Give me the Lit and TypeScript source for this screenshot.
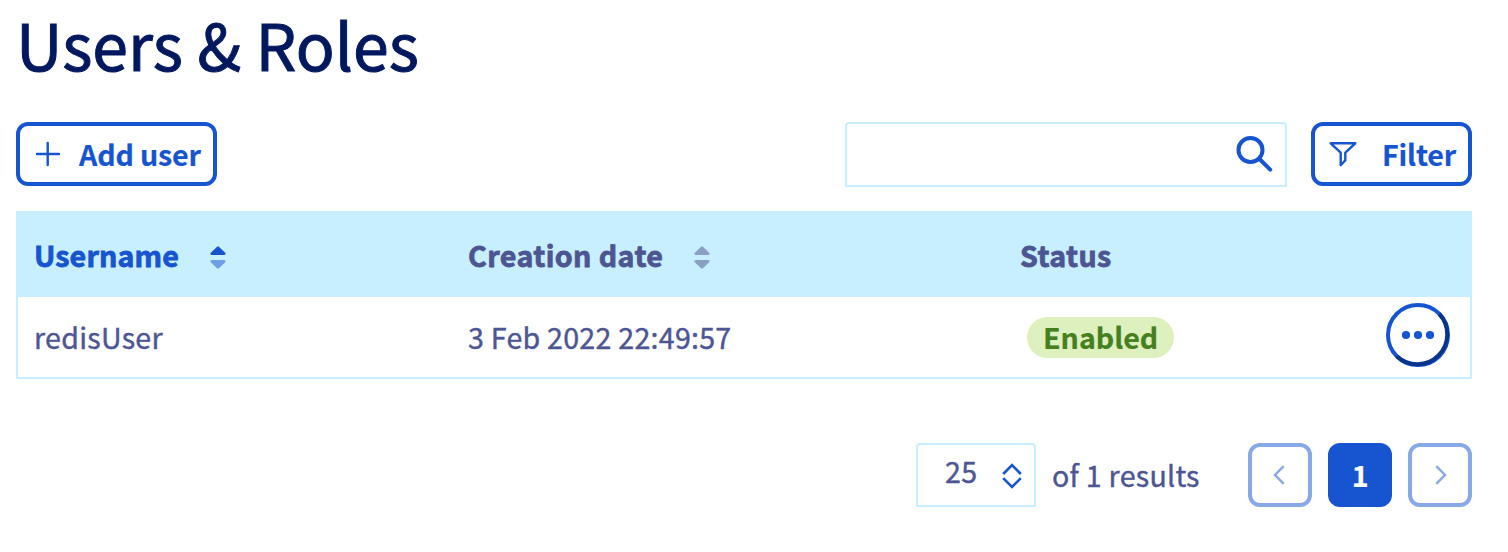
import { LitElement, html, css, svg } from "lit";
import { customElement } from "lit/decorators.js";
import { classMap } from "lit/directives/class-map.js";

const columns = [
  { label: "Username", sortable: true, active: true },
  { label: "Creation date", sortable: true, active: false },
  { label: "Status", sortable: false, active: false },
];

const users = [{ name: "redisUser", created: "3 Feb 2022 22:49:57", status: "Enabled" }];

const sortArrows = svg`
  <path d="M7.1.7Q8-.1 8.9.7L15.2 6.8Q15.9 7.6 15.4 8.3Q15 9 14.2 9H1.8Q1 9 .6 8.3Q.1 7.6.8 6.8Z"/>
  <path class="down" d="M7.1 22.3Q8 23.1 8.9 22.3L15.2 16.2Q15.9 15.4 15.4 14.7Q15 14 14.2 14H1.8Q1 14 .6 14.7Q.1 15.4.8 16.2Z"/>`;

@customElement("app-root")
export class AppRoot extends LitElement {
  static styles = css`
    :host {
      display: block;
      box-sizing: border-box;
      height: 552px;
      padding: 0 36px 0 16px;
      background: #fff;
      color: #4d5592;
      font-family: "Noto Sans CJK SC", "Noto Sans CJK JP", sans-serif;
      font-size: 28.6px;
      line-height: 40px;
      letter-spacing: 0.26px;
      -webkit-text-stroke: 0.4px currentColor;
      white-space: nowrap;
    }
    * { box-sizing: border-box; }
    svg { display: block; flex: none; fill: none; stroke: currentColor; }
    h1 {
      margin: 0;
      height: 122px;
      color: #00185e;
      font-size: 64.4px;
      line-height: 86px;
      font-weight: 400;
      letter-spacing: 0;
      -webkit-text-stroke: 1px currentColor;
    }
    button {
      display: flex;
      align-items: center;
      height: 64px;
      margin: 0;
      padding: 0;
      border: 4px solid #1654d0;
      border-radius: 12px;
      background: #fff;
      color: #1654d0;
      font: inherit;
      font-weight: 700;
      letter-spacing: -0.15px;
      -webkit-text-stroke: 0.2px currentColor;
    }
    .toolbar { display: flex; height: 65px; align-items: flex-start; margin-bottom: 24px; }
    .add { width: 201px; padding-left: 15px; gap: 18px; }
    .search {
      display: flex;
      justify-content: flex-end;
      width: 442px;
      height: 65px;
      margin: 0 24px 0 auto;
      padding: 11px 12px 0 0;
      border: 2px solid #c8efff;
      border-radius: 4px 4px 0 0;
      color: #1654d0;
    }
    .filter { width: 161px; padding-left: 14px; gap: 25px; }
    .table { height: 168px; border: 2px solid #c8efff; border-top: 0; }
    .row {
      display: grid;
      grid-template-columns: 434px 552px 1fr auto;
      align-items: center;
      height: 80px;
      padding-left: 16px;
    }
    .head {
      height: 86px;
      padding-top: 2px;
      background: #c8efff;
      font-weight: 700;
      letter-spacing: 0.43px;
      -webkit-text-stroke: 0.8px currentColor;
    }
    .cell { display: flex; align-items: center; gap: 31px; }
    .active { color: #1654d0; letter-spacing: 0.15px; }
    .sort { fill: #8b9fc4; stroke: none; margin-top: 5px; }
    .active .sort { fill: #1654d0; }
    .active .down { fill: #6d9fe6; }
    .badge {
      height: 41px;
      margin-left: 7px;
      padding: 0 16px;
      border-radius: 21px;
      background: #ddf0be;
      color: #457f20;
      font-weight: 700;
      letter-spacing: 0;
      -webkit-text-stroke: 0.2px currentColor;
    }
    .more { color: #1654d0; margin: 0 20px 4px 0; }
    .pager { display: flex; align-items: flex-start; justify-content: flex-end; margin-top: 64px; }
    .size {
      display: flex;
      width: 120px;
      height: 64px;
      padding: 6px 12px 0 27px;
      justify-content: space-between;
      border: 2px solid #c8efff;
      border-radius: 4px 4px 0 0;
    }
    .size svg { color: #1654d0; margin-top: 12px; }
    .results { width: 148px; margin: 12px 48px 0 16px; }
    .page { width: 64px; justify-content: center; margin-left: 16px; }
    .prev { margin-left: 0; padding-right: 2px; }
    .next { padding-left: 2px; }
    .muted { border-color: #87a9e6; color: #87a9e6; }
    .current { background: #1654d0; color: #fff; }
  `;

  render() {
    return html`
      <h1>Users &amp; Roles</h1>
      <div class="toolbar">
        <button class="add">
          <svg width="26" height="26" viewBox="0 0 26 26" stroke-width="2.4" stroke-linecap="round"><path d="M2 13H24M12.7 2V24"/></svg>
          <span class="add-label">Add user</span>
        </button>
        <div class="search">
          <svg width="38" height="38" viewBox="0 0 38 38" stroke-width="4" stroke-linecap="round"><circle cx="15.5" cy="15" r="12"/><path d="M24.5 24L35.2 34.7"/></svg>
        </div>
        <button class="filter">
          <svg width="28" height="28" viewBox="0 0 28 28" stroke-width="2.4" stroke-linejoin="round"><path d="M1.7 3.3H26.3L16.3 12.6V20.2L11.7 25.2V12.6Z"/></svg>
          <span class="filter-label">Filter</span>
        </button>
      </div>
      <div class="table">
        <div class="row head">
          ${columns.map(
            (c) => html`<div class=${classMap({ cell: true, active: c.active })}>
              <span>${c.label}</span>
              ${c.sortable ? html`<svg class="sort" width="16" height="23" viewBox="0 0 16 23">${sortArrows}</svg>` : null}
            </div>`
          )}
        </div>
        ${users.map(
          (u) => html`<div class="row">
            <div class="cell">${u.name}</div>
            <div class="cell">${u.created}</div>
            <div class="cell"><span class="badge">${u.status}</span></div>
            <svg class="more" width="64" height="64" viewBox="0 0 64 64" stroke-width="4">
              <circle cx="32" cy="32" r="30"/>
              <path stroke="#08348c" d="M53.2 10.8A30 30 0 0 1 10.8 53.2"/>
              <g fill="currentColor" stroke="none"><circle cx="20" cy="32" r="4.1"/><circle cx="32" cy="32" r="4.1"/><circle cx="44" cy="32" r="4.1"/></g>
            </svg>
          </div>`
        )}
      </div>
      <div class="pager">
        <div class="size">
          <span>25</span>
          <svg width="20" height="26" viewBox="0 0 20 26" stroke-width="2.6"><path d="M1.2 11L10 2.2L18.8 11M1.2 15.2L10 24L18.8 15.2"/></svg>
        </div>
        <div class="results">of 1 results</div>
        <button class="page prev muted">
          <svg width="12" height="20" viewBox="0 0 12 20" stroke-width="2.5" stroke-linecap="round"><path d="M10 1.8L2 10L10 18.2"/></svg>
        </button>
        <button class="page current">1</button>
        <button class="page next muted">
          <svg width="12" height="20" viewBox="0 0 12 20" stroke-width="2.5" stroke-linecap="round"><path d="M2 1.8L10 10L2 18.2"/></svg>
        </button>
      </div>
    `;
  }
}
